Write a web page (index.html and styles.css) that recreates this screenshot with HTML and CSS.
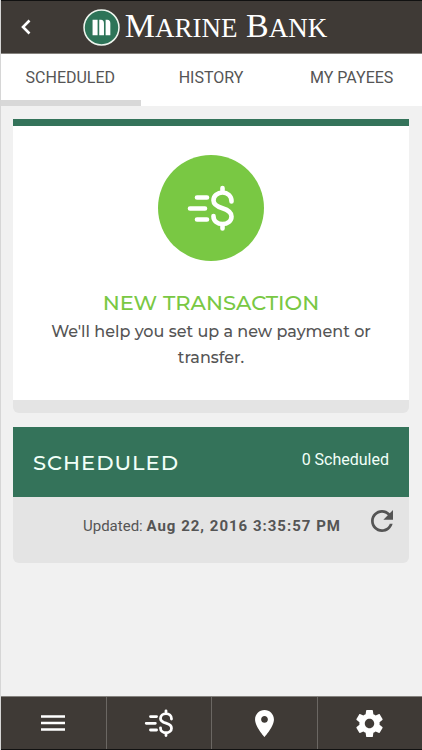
FILE: index.html
```html
<!DOCTYPE html>
<html lang="en">
<head>
<meta charset="utf-8">
<meta name="viewport" content="width=device-width, initial-scale=1">
<title>Marine Bank</title>
<link rel="stylesheet" href="styles.css">
</head>
<body>
<svg class="sprite" aria-hidden="true">
  <symbol id="send-money" viewBox="0 0 48 46">
    <g fill="none" stroke="currentColor" stroke-width="4.600" stroke-linecap="round">
      <path d="M10 12.500H20M3 23.500H18M10 34.500H20"/>
      <path d="M44.500 16.500V16C44.500 11 40.500 7.500 35.500 7.500S26.500 11 26.500 15.500C26.500 20 30.500 21.700 35.500 23.200S44.500 27 44.500 31.500S40.500 39 35.500 39S26.500 36 26.500 31.500V31M35.500 7V3M35.500 40V43.500"/>
    </g>
  </symbol>
</svg>
<header class="topbar">
  <button class="back" type="button" aria-label="Back">
    <svg class="back-icon" viewBox="0 0 10 16"><path d="M8.500 1.500L2 8L8.500 14.500" fill="none" stroke="currentColor" stroke-width="2.600"/></svg>
  </button>
  <div class="brand">
    <svg class="brand-mark" viewBox="0 0 36 36" aria-hidden="true">
      <circle cx="18" cy="18" r="17" fill="#2d7458" stroke="#eef5ee" stroke-width="1.500"/>
      <path d="M9.300 10.500H14.200V25.500H9.300ZM15.800 10.500H17.500Q20.400 10.500 20.400 14V25.500H15.800ZM22 10.500H23.700Q26.600 10.500 26.600 14V25.500H22Z" fill="#fff"/>
    </svg>
    <span class="brand-name">M<span class="brand-caps">ARINE</span> B<span class="brand-caps">ANK</span></span>
  </div>
</header>
<nav class="tabs" aria-label="Payments">
  <a class="tab tab-active" href="#scheduled" aria-current="page">SCHEDULED</a>
  <a class="tab" href="#history">HISTORY</a>
  <a class="tab" href="#payees">MY PAYEES</a>
</nav>
<main class="content">
  <a class="card new-card" href="#new">
    <span class="money-circle"><svg class="money-icon"><use href="#send-money"/></svg></span>
    <span class="new-title">NEW TRANSACTION</span>
    <span class="new-text">We'll help you set up a new payment or transfer.</span>
  </a>
  <section class="card" id="scheduled">
    <div class="card-head">
      <h2 class="card-title">SCHEDULED</h2>
      <span class="card-count">0 Scheduled</span>
    </div>
    <div class="card-status">
      <p class="updated">Updated: <strong class="updated-date">Aug 22, 2016 3:35:57 PM</strong></p>
      <button class="refresh" type="button" aria-label="Refresh">
        <svg class="refresh-icon" viewBox="4 4 16 16"><path fill="currentColor" d="M17.650 6.350C16.200 4.900 14.210 4 12 4c-4.420 0-7.990 3.580-7.990 8s3.570 8 7.990 8c3.730 0 6.840-2.550 7.730-6h-2.080c-.820 2.330-3.040 4-5.650 4-3.310 0-6-2.690-6-6s2.690-6 6-6c1.660 0 3.140.690 4.220 1.780L13 11h7V4l-2.350 2.350z"/></svg>
      </button>
    </div>
  </section>
</main>
<nav class="bottombar" aria-label="Main">
  <a class="bottom-item" href="#menu" aria-label="Menu"><svg class="menu-icon" viewBox="0 0 24 16"><path d="M0 1.500H24M0 8H24M0 14.500H24" stroke="currentColor" stroke-width="2.600"/></svg></a>
  <a class="bottom-item" href="#payments" aria-label="Payments"><svg class="pay-icon"><use href="#send-money"/></svg></a>
  <a class="bottom-item" href="#locations" aria-label="Locations"><svg class="pin-icon" viewBox="5 2 14 20"><path fill="currentColor" d="M12 2C8.130 2 5 5.130 5 9c0 5.250 7 13 7 13s7-7.750 7-13c0-3.870-3.130-7-7-7zm0 9.500c-1.380 0-2.500-1.120-2.500-2.500s1.120-2.500 2.500-2.500 2.500 1.120 2.500 2.500-1.120 2.500-2.500 2.500z"/></svg></a>
  <a class="bottom-item" href="#settings" aria-label="Settings"><svg class="gear-icon" viewBox="2 2 20 20"><path fill="currentColor" d="M19.430 12.980c.040-.320.070-.640.070-.980s-.030-.660-.070-.980l2.110-1.650c.190-.150.240-.420.120-.640l-2-3.460c-.120-.220-.390-.300-.610-.220l-2.490 1c-.520-.400-1.080-.730-1.690-.980l-.380-2.650C14.460 2.180 14.250 2 14 2h-4c-.250 0-.460.180-.490.420l-.380 2.650c-.610.250-1.170.590-1.690.980l-2.490-1c-.230-.090-.490 0-.610.220l-2 3.460c-.130.220-.070.490.120.640l2.110 1.650c-.040.320-.070.650-.070.980s.030.660.070.980l-2.110 1.650c-.190.150-.240.420-.120.640l2 3.460c.120.220.390.300.610.220l2.490-1c.520.400 1.080.730 1.690.980l.380 2.650c.030.240.240.420.490.420h4c.250 0 .460-.180.490-.420l.380-2.650c.610-.250 1.170-.590 1.690-.980l2.490 1c.230.090.490 0 .610-.220l2-3.460c.120-.220.070-.490-.120-.640l-2.110-1.650zM12 15.500c-1.930 0-3.500-1.570-3.500-3.500s1.570-3.500 3.500-3.500 3.500 1.570 3.500 3.500-1.570 3.500-3.500 3.500z"/></svg></a>
</nav>
</body>
</html>
```
FILE: styles.css
```css
* {
  box-sizing: border-box;
}

body {
  margin: 0;
  min-height: 100vh;
  display: flex;
  flex-direction: column;
  background: #f1f1f1;
  border-left: 1px solid #d6d6d6;
  color: #555;
  font-family: Roboto, "Liberation Sans", sans-serif;
  font-size: 16px;
}

a {
  color: inherit;
  text-decoration: none;
}

button {
  padding: 0;
  border: 0;
  background: none;
  color: inherit;
  cursor: pointer;
}

svg {
  display: block;
}

.sprite {
  position: absolute;
  width: 0;
  height: 0;
}

.topbar {
  display: grid;
  grid-template-columns: 52px 1fr 52px;
  align-items: center;
  height: 54px;
  margin-left: -1px;
  border-top: 1px solid #111;
  border-bottom: 1px solid #85827e;
  background: #3f3a36;
  color: #fff;
}

.back {
  display: grid;
  place-items: center;
  height: 52px;
}

.back-icon {
  width: 10px;
  height: 16px;
}

.brand {
  display: flex;
  align-items: center;
  justify-content: center;
  gap: 5px;
  padding-right: 12px;
}

.brand-mark {
  flex: none;
  width: 37px;
  height: 37px;
}

.brand-name {
  font-family: "Liberation Serif", serif;
  font-size: 34px;
  line-height: 36px;
  white-space: nowrap;
}

.brand-caps {
  font-size: 27px;
}

.tabs {
  display: grid;
  grid-template-columns: repeat(3, 1fr);
  height: 52px;
  margin-left: -1px;
  background: #fff;
}

.tab {
  padding-top: 12px;
  border-bottom: 6px solid transparent;
  line-height: 24px;
  text-align: center;
}

.tab-active {
  border-bottom-color: #d8d8d8;
}

.content {
  flex: 1;
  display: flex;
  flex-direction: column;
  gap: 14px;
  padding: 13px 13px 13px 12px;
}

.card {
  border-radius: 0 0 6px 6px;
  background: #e4e4e4;
  overflow: hidden;
}

.new-card {
  display: flex;
  flex-direction: column;
  align-items: center;
  padding: 29px 32px;
  border-top: 7px solid #34735a;
  border-bottom: 13px solid #e4e4e4;
  background: #fff;
  font-family: Montserrat, Inter, sans-serif;
  text-align: center;
}

.money-circle {
  display: grid;
  place-items: center;
  width: 106px;
  height: 106px;
  margin-bottom: 26px;
  border-radius: 50%;
  background: #79c843;
  color: #fff;
}

.money-icon {
  width: 48px;
  height: 46px;
}

.new-title {
  color: #79c843;
  font-size: 21px;
  font-weight: 500;
  line-height: 32px;
}

.new-text {
  font-size: 16px;
  font-weight: 500;
  line-height: 26px;
}

.card-head {
  display: flex;
  justify-content: space-between;
  align-items: center;
  height: 70px;
  padding: 0 20px;
  background: #34735a;
  color: #f1fff8;
}

.card-title {
  margin: 0;
  font-family: Montserrat, Inter, sans-serif;
  font-size: 21px;
  font-weight: 500;
  letter-spacing: 1px;
}

.card-count {
  padding-bottom: 6px;
}

.card-status {
  display: grid;
  grid-template-columns: 1fr auto;
  align-items: start;
  height: 66px;
  padding: 13px 16px 0 70px;
}

.updated {
  margin: 0;
  padding-top: 4px;
  font-size: 15px;
  line-height: 24px;
}

.updated-date {
  letter-spacing: 1px;
}

.refresh-icon {
  width: 22px;
  height: 22px;
}

.bottombar {
  display: grid;
  grid-template-columns: repeat(4, 1fr);
  height: 54px;
  margin-left: -1px;
  border-top: 1px solid #85827e;
  border-bottom: 1px solid #111;
  background: #3f3a36;
  color: #fff;
}

.bottom-item {
  display: grid;
  place-items: center;
}

.bottom-item + .bottom-item {
  border-left: 1px solid #6b6763;
}

.menu-icon {
  width: 24px;
  height: 16px;
}

.pay-icon {
  width: 30px;
  height: 28px;
}

.pin-icon {
  width: 19px;
  height: 27px;
}

.gear-icon {
  width: 27px;
  height: 27px;
}
```
